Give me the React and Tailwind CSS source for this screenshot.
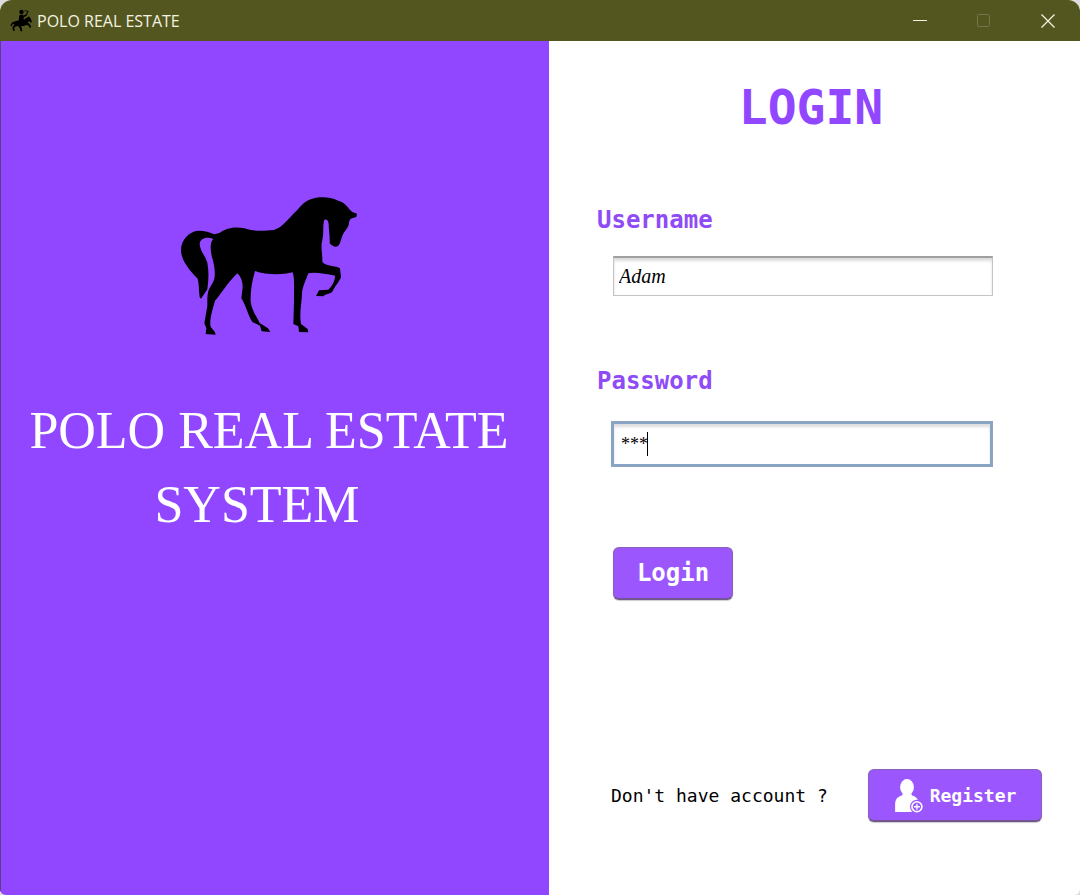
const MONO = "font-['DejaVu_Sans_Mono','Liberation_Mono',monospace]";

function RiderIcon() {
  return (
    <svg viewBox="30 24 68 68" className="size-[23px]" aria-hidden="true">
      <g fill="#000">
        <circle cx="64" cy="33" r="6.5" />
        <path d="M57 43 L64 40 L71 43 L78 39 L80 43 L72 48 L70 52 L71 56 L79 50 L87 46 L91 52 L95 62 L91 65 L86 59 L83 64 L88 68 L93 77 L88 80 L85 73 L78 71 L71 74 L63 74 L65 82 L66 90 L61 90 L59 82 L54 74 L47 76 L42 80 L45 88 L39 88 L37 79 L43 69 L38 68 L34 76 L31 73 L36 64 L46 60 L56 57 Z" />
        <path d="M77 41 L81 31 L73 31 L73 28 L85 30 L80 42 Z" />
      </g>
    </svg>
  );
}

function HorseLogo() {
  return (
    <svg viewBox="48 51 528 414" className="h-[138px] w-44" role="img" aria-label="Horse">
      <path
        fill="#000"
        d="M148 163 C135 157 119 152 100 152 C72 154 48 180 48 210 C48 238 68 266 98 296 C103 315 101 334 104 352 L108 356 L127 328 C131 300 132 275 127 248 C120 225 104 212 104 190 C108 172 130 170 145 177 C134 188 136 208 141 232 C150 260 153 290 144 307 L132 328 C126 342 127 360 127 378 L118 430 L124 445 L122 462 L152 464 L150 457 L137 440 C132 420 143 388 150 362 C168 344 182 314 217 280 C228 290 233 305 233 322 L229 355 C244 378 248 405 262 426 L285 437 L290 454 L316 456 L309 445 L284 429 C277 411 261 394 257 365 C256 335 260 308 270 273 C300 284 350 286 383 277 C390 300 386 330 387 365 L385 432 L400 439 L402 456 L430 457 L428 447 L408 432 C402 400 411 365 411 340 C413 318 423 300 430 280 C450 275 479 281 510 287 C510 305 500 319 490 329 L462 331 L453 348 L475 349 C482 340 491 344 502 335 C509 319 524 304 528 291 L525 265 C515 256 488 262 472 246 C473 225 466 200 472 180 C477 160 473 139 477 121 C482 115 491 121 491 133 C491 150 495 165 494 190 C499 197 507 200 513 200 C526 199 526 182 532 168 C536 155 549 145 551 134 C552 125 554 117 561 115 L574 111 L576 101 L562 96 C548 84 543 68 520 62 C500 53 485 51 464 52 C432 55 413 69 397 90 C373 112 355 141 327 150 C285 155 260 152 238 145 C205 138 180 147 163 159 Z"
      />
    </svg>
  );
}

function AddUserIcon() {
  return (
    <svg viewBox="102 80 90 106" className="h-[35px] w-[30px]" aria-hidden="true">
      <ellipse cx="141" cy="108" rx="21" ry="25" fill="#fff" />
      <path
        fill="#fff"
        d="M105 183 V160 C105 143 115 135 126 133 L128 127 H154 L156 133 C164 135 170 139 174 146 L152 166 L158 183 Z"
      />
      <circle cx="171" cy="167" r="21" fill="#9b57fd" />
      <circle cx="171" cy="167" r="15" fill="none" stroke="#fff" strokeWidth="5" />
      <path d="M171 158 V176 M162 167 H180" stroke="#fff" strokeWidth="4" />
    </svg>
  );
}

function TitleBar() {
  return (
    <header className="flex h-[41px] shrink-0 items-center bg-[#53561f] pl-[10px] text-[#f3f3e2]">
      <RiderIcon />
      <span className="ml-1 grow font-['Open_Sans','Noto_Sans',sans-serif] text-[16px] leading-6">
        POLO REAL ESTATE
      </span>
      <button type="button" aria-label="Minimize" className="flex h-full w-16 items-center justify-center">
        <svg viewBox="0 0 16 16" className="size-4" fill="none" stroke="currentColor">
          <path d="M1 7.5 H15" />
        </svg>
      </button>
      <button type="button" aria-label="Maximize" disabled className="flex h-full w-16 items-center justify-center text-[#74774a]">
        <svg viewBox="0 0 16 16" className="size-4" fill="none" stroke="currentColor">
          <rect x="1.5" y="1.5" width="12" height="12" rx="1" />
        </svg>
      </button>
      <button type="button" aria-label="Close" className="flex h-full w-16 items-center justify-center">
        <svg viewBox="0 0 16 16" className="size-4" fill="none" stroke="currentColor" strokeWidth="1.3">
          <path d="M1.5 1.5 L14.5 14.5 M14.5 1.5 L1.5 14.5" />
        </svg>
      </button>
    </header>
  );
}

const buttonBase =
  "flex h-[53px] items-center justify-center rounded-md border border-[#8763b5] border-b-2 border-b-[#71568f] bg-[#9b57fd] font-bold text-white shadow-[0_1px_1px_#cccccc]";

export default function App() {
  return (
    <div className="min-h-screen bg-[#dddddb]">
      <div className="flex min-h-screen flex-col overflow-hidden rounded-t-xl rounded-b-md">
        <TitleBar />
        <main className="grid grow grid-cols-[549fr_531fr]">
          <section className="flex flex-col items-center border-l border-[#5b3f86] bg-[#9147ff] pr-3 pt-[156px]">
            <HorseLogo />
            <h1 className="mt-[59px] text-center font-['Liberation_Serif',serif] text-[52px] leading-[74px] whitespace-nowrap text-white">
              <span className="block">POLO REAL ESTATE</span>
              <span className="block pr-6">SYSTEM</span>
            </h1>
          </section>

          <section className={`flex flex-col bg-white pl-12 ${MONO}`}>
            <form className="flex flex-col pr-[87px]" onSubmit={(e) => e.preventDefault()}>
              <h2 className="mt-9 pl-8 text-center text-[48px] leading-[60px] font-bold text-[#9147ff]">
                LOGIN
              </h2>

              <label htmlFor="username" className="mt-[67px] text-[24px] leading-8 font-bold text-[#8f4bf5]">
                Username
              </label>
              <div className="mt-5 pl-4">
                <input
                  id="username"
                  type="text"
                  defaultValue="Adam"
                  className="block h-10 w-full border border-[#c4c4c4] border-t-2 border-t-[#a0a0a0] bg-white px-[5px] font-['Liberation_Serif',serif] text-[20px] text-black italic shadow-[inset_0_3px_3px_#dddddd] outline-none"
                />
              </div>

              <label htmlFor="password" className="mt-[69px] text-[24px] leading-8 font-bold text-[#8f4bf5]">
                Password
              </label>
              <div className="mt-6 pl-[14px]">
                <div className="relative">
                  <input
                    id="password"
                    type="text"
                    autoComplete="off"
                    defaultValue="***"
                    className="block h-[46px] w-full border-3 border-[#8aa5c3] bg-white px-[7px] font-['Liberation_Serif',serif] text-[18px] text-black shadow-[inset_0_3px_3px_#dddddd] outline-none"
                  />
                  <span className="absolute top-[11px] left-9 h-6 w-px bg-black" aria-hidden="true" />
                </div>
              </div>

              <button type="submit" className={`${buttonBase} mt-20 ml-4 w-[120px] text-[24px]`}>
                Login
              </button>
            </form>

            <div className="mt-auto mb-[73px] flex items-center justify-between pr-[38px] pl-[14px]">
              <p className="text-[18px] whitespace-nowrap text-black">Don't have account ?</p>
              <button type="button" className={`${buttonBase} w-[174px] gap-[6px] text-[18px]`}>
                <AddUserIcon />
                Register
              </button>
            </div>
          </section>
        </main>
      </div>
    </div>
  );
}
